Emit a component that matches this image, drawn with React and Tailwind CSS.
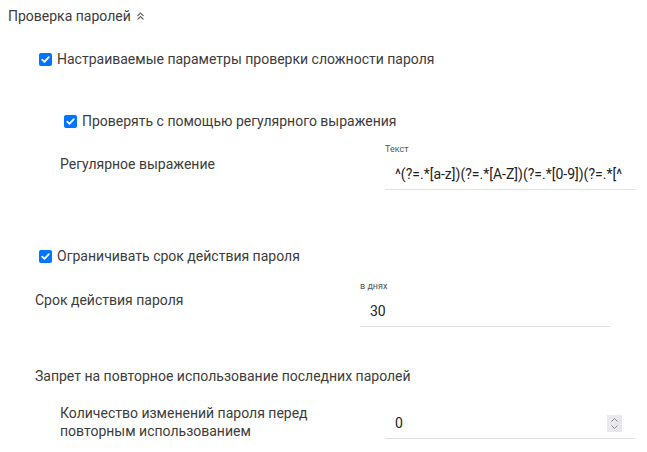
import React from "react";

const Check = ({ label, className = "" }) => (
  <label className={`flex items-center h-[20px] ${className}`}>
    <span className="w-[13px] h-[13px] rounded-[2px] bg-[#0075ff] flex items-center justify-center mr-[5px]">
      <svg width="11" height="11" viewBox="0 0 11 11" fill="none">
        <path d="M2.2 5.6 L4.4 7.8 L8.8 3.2" stroke="white" strokeWidth="1.8" strokeLinecap="round" strokeLinejoin="round" />
      </svg>
    </span>
    <span>{label}</span>
  </label>
);

const Field = ({ caption, value, spinner }) => (
  <div className="w-[250px] flex flex-col">
    {caption && <div className="h-[12px] leading-[12px] text-[9px] text-[#555] mb-[5px]">{caption}</div>}
    <div className="h-[30px] flex items-center pl-[10px] pr-[13px] border-b border-[#e0e0e0] text-[#222] overflow-hidden whitespace-nowrap">
      <span className="flex-1 overflow-hidden">{value}</span>
      {spinner && (
        <span className="w-[15px] h-[17px] bg-[#e9e9ed] flex items-center justify-center">
          <svg width="9" height="13" viewBox="0 0 9 13" fill="none">
            <path d="M1.5 4.5 L4.5 1.5 L7.5 4.5" stroke="#8a8a8a" strokeWidth="1" />
            <path d="M1.5 8.5 L4.5 11.5 L7.5 8.5" stroke="#8a8a8a" strokeWidth="1" />
          </svg>
        </span>
      )}
    </div>
  </div>
);

export default function App() {
  return (
    <div className="w-[647px] h-[452px] bg-white overflow-hidden text-[14px] text-[#3c3c3c] font-['Roboto',sans-serif]">
      <div className="h-[32px] flex items-center pl-[8px]">
        <span>Проверка паролей</span>
        <svg className="ml-[5px]" width="9" height="10" viewBox="0 0 9 10" fill="none">
          <path d="M1.5 5 L4.5 2 L7.5 5" stroke="#666" strokeWidth="1.1" />
          <path d="M1.5 8.5 L4.5 5.5 L7.5 8.5" stroke="#666" strokeWidth="1.1" />
        </svg>
      </div>

      <Check className="mt-[17px] ml-[39px]" label="Настраиваемые параметры проверки сложности пароля" />
      <Check className="mt-[42px] ml-[64px]" label="Проверять с помощью регулярного выражения" />

      <div className="mt-[12px] flex items-start">
        <div className="w-[325px] ml-[60px] pt-[11px] leading-[20px]">Регулярное выражение</div>
        <Field caption="Текст" value="^(?=.*[a-z])(?=.*[A-Z])(?=.*[0-9])(?=.*[^\w\s]).{8,}$" />
      </div>

      <Check className="mt-[56px] ml-[39px]" label="Ограничивать срок действия пароля" />

      <div className="mt-[14px] flex items-start">
        <div className="w-[325px] ml-[35px] pt-[10px] leading-[20px]">Срок действия пароля</div>
        <Field caption="в днях" value="30" />
      </div>

      <div className="mt-[39px] ml-[35px] h-[20px] leading-[20px]">Запрет на повторное использование последних паролей</div>

      <div className="mt-[18px] flex items-start">
        <div className="w-[325px] ml-[60px] leading-[18px] pr-[60px]">
          Количество изменений пароля перед повторным использованием
        </div>
        <div className="mt-[5px]">
          <Field value="0" spinner />
        </div>
      </div>
    </div>
  );
}
